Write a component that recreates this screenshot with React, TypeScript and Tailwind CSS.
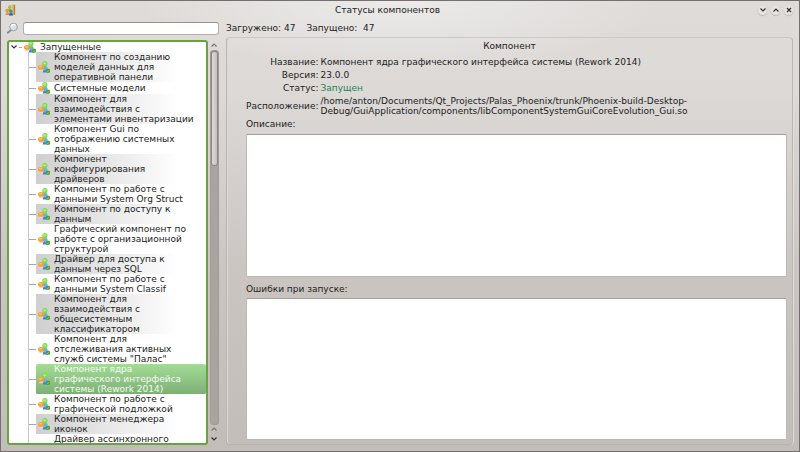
import { ReactNode } from "react";

type Row = { text: string; partial?: boolean };

const rows: Row[] = [
  { text: "Компонент по созданию\nмоделей данных для\nоперативной панели" },
  { text: "Системные модели" },
  { text: "Компонент для\nвзаимодействия с\nэлементами инвентаризации" },
  { text: "Компонент Gui по\nотображению системных\nданных" },
  { text: "Компонент\nконфигурирования\nдрайверов" },
  { text: "Компонент по работе с\nданными System Org Struct" },
  { text: "Компонент по доступу к\nданным" },
  { text: "Графический компонент по\nработе с организационной\nструктурой" },
  { text: "Драйвер для доступа к\nданным через SQL" },
  { text: "Компонент по работе с\nданными System Classif" },
  { text: "Компонент для\nвзаимодействия с\nобщесистемным\nклассификатором" },
  { text: "Компонент для\nотслеживания активных\nслужб системы \"Палас\"" },
  { text: "Компонент ядра\nграфического интерфейса\nсистемы (Rework 2014)" },
  { text: "Компонент по работе с\nграфической подложкой" },
  { text: "Компонент менеджера\nиконок" },
  { text: "Драйвер ассинхронного", partial: true },
];

const SELECTED = 12;

function PeopleIcon() {
  return (
    <svg viewBox="0 0 12 12" className="size-3 shrink-0" aria-hidden="true">
      <path d="M4.500 7.500C4.500 5.400 5.400 4.500 7 4.500s2.700 0.900 2.700 3z" fill="#8fd463" />
      <circle cx="6.900" cy="2.700" r="2.600" fill="#7ddc48" />
      <circle cx="6.700" cy="2.300" r="1.400" fill="#a9ee78" />
      <path d="M1.200 10.200C1.200 8.400 2 7.600 3.400 7.600s2.400 0.800 2.400 2.600z" fill="#e6d8c2" />
      <ellipse cx="3" cy="6.400" rx="3" ry="2.300" fill="#f7a02c" />
      <ellipse cx="2.600" cy="5.800" rx="1.600" ry="1" fill="#ffc566" />
      <path d="M4.800 11.500c0-2.300 1-3.500 2.900-3.500s2.700 1.200 2.700 3.500z" fill="#3f83d6" />
      <circle cx="7.400" cy="7.400" r="2.100" fill="#6fabf0" />
      <rect x="8" y="7.800" width="4" height="4" rx="1.200" fill="#4fa02a" />
      <path d="M8.900 9.800l0.900 0.900 1.300-1.600" fill="none" stroke="#a9e285" strokeWidth="0.600" />
    </svg>
  );
}

function AppIcon() {
  return (
    <svg viewBox="0 0 12 12" className="size-3" aria-hidden="true">
      <path d="M4 1.2L9.6 0.6v10.2L4 11.4z" fill="#e9bd68" />
      <path d="M8.6 0.6l1.6 0.6v9.4l-1.6 0.7z" fill="#b88637" />
      <path d="M5 2.2l1.2-0.2v5L5 7.2z" fill="#fff1c4" />
      <circle cx="4.6" cy="3.2" r="1.6" fill="#7fcf46" />
      <path d="M3 7c0-1.6 0.7-2.2 1.8-2.2S6.500 5.400 6.500 7z" fill="#64b62f" />
      <circle cx="2.300" cy="6.600" r="1.900" fill="#f2952a" />
      <path d="M0.500 11c0-2 0.700-2.700 2-2.700s2 0.700 2 2.700z" fill="#c69a66" />
      <circle cx="6" cy="7.400" r="1.700" fill="#4d86cf" />
      <path d="M4 11.600c0-2 0.700-2.700 2-2.700s2 0.700 2 2.700z" fill="#2c62ab" />
    </svg>
  );
}

function SearchIcon() {
  return (
    <svg viewBox="0 0 13 13" className="size-[13px] shrink-0" aria-hidden="true">
      <path d="M5 8L1.800 10.800" stroke="#8b8d91" strokeWidth="1.800" strokeLinecap="round" />
      <circle cx="7.500" cy="5" r="3.800" fill="#d5e2ef" stroke="#9aa0a8" strokeWidth="1" />
      <path d="M5 5a2.500 2.500 0 0 1 4.500-1.500" fill="none" stroke="#fff" strokeWidth="1.200" />
    </svg>
  );
}

function Chevron({ up = false, color = "#333" }: { up?: boolean; color?: string }) {
  return (
    <svg viewBox="0 0 8 6" className="h-[6px] w-2" aria-hidden="true">
      <path d={up ? "M1.500 4.500L4 2l2.500 2.500" : "M1.500 1.500L4 4l2.500-2.500"} fill="none" stroke={color} strokeWidth="1.200" />
    </svg>
  );
}

function WindowButton({ label, children }: { label: string; children: ReactNode }) {
  return (
    <button
      type="button"
      aria-label={label}
      className="flex size-[9px] items-center justify-center rounded-full bg-[#e6e3e1] shadow-[0_1px_1px_#bcb8b6]"
    >
      {children}
    </button>
  );
}

function ComponentTree() {
  return (
    <div className="flex w-[212px] shrink-0 gap-[1px]">
      <div className="min-h-0 w-[201px] overflow-hidden rounded-[3px] border-2 border-[#68a342] bg-white">
        <button type="button" aria-expanded="true" className="flex h-[10px] w-full items-center text-left">
          <span className="flex w-[10px] justify-center">
            <Chevron />
          </span>
          <span className="mr-[2px] h-px w-[3px] bg-[#a8a8a8]" />
          <PeopleIcon />
          <span className="ml-1">Запущенные</span>
        </button>
        <ul className="ml-[19px] border-l border-[#c9c9c9]">
          {rows.map((row, i) => {
            const selected = i === SELECTED;
            const tone = selected
              ? "rounded-[2px] bg-linear-to-b from-[#a3dc95] to-[#7fb077] text-[#f4faf2] shadow-[inset_0_-1px_0_#7cae70]"
              : i % 2 === 0
                ? "bg-linear-to-r from-[#cfcfcf] to-white to-[142px]"
                : "";
            return (
              <li key={row.text} className="flex items-center">
                {!row.partial && <span className="h-px w-[7px] shrink-0 bg-[#a8a8a8]" />}
                <button
                  type="button"
                  aria-pressed={selected}
                  className={`flex flex-1 items-center gap-1 text-left whitespace-pre ${row.partial ? "pl-[25px]" : "min-h-3 pl-[2px]"} ${tone}`}
                >
                  {!row.partial && <PeopleIcon />}
                  <span>{row.text}</span>
                </button>
              </li>
            );
          })}
        </ul>
      </div>
      <div className="flex w-[10px] flex-col items-center">
        <button type="button" aria-label="Вверх" className="flex h-[10px] items-center">
          <Chevron up color="#777" />
        </button>
        <div className="w-[9px] flex-1 rounded-[3px] border border-[#a19b98] bg-[#aaa4a1]">
          <div className="h-[115px] rounded-[3px] border border-[#8b8683] bg-linear-to-r from-[#dedbd9] to-[#c4bfbc]" />
        </div>
        <button type="button" aria-label="Вверх на строку" className="flex h-2 items-center">
          <Chevron up color="#777" />
        </button>
        <button type="button" aria-label="Вниз" className="flex h-3 items-center">
          <Chevron />
        </button>
      </div>
    </div>
  );
}

function Field({ label, children }: { label: string; children: ReactNode }) {
  return (
    <>
      <dt className="self-center text-right">{label}</dt>
      <dd>{children}</dd>
    </>
  );
}

const areaClass =
  "block min-h-0 w-full flex-1 resize-none rounded-[2px] border border-[#bdb8b5] border-t-[#a39e9b] bg-white p-1 outline-none";

function Details() {
  return (
    <section className="flex min-w-0 flex-1 flex-col rounded-[4px] border border-[#b9b4b1] border-t-[#cbc8c6] px-[5px] pb-1 pl-[19px] shadow-[inset_1px_0_0_#dedad8,1px_0_0_#e2dfdd]">
      <h2 className="mt-[2px] pr-[14px] text-center leading-[12px]">Компонент</h2>
      <dl className="mt-[5px] grid grid-cols-[auto_1fr] gap-x-[2px] gap-y-[3px]">
        <Field label="Название:">Компонент ядра графического интерфейса системы (Rework 2014)</Field>
        <Field label="Версия:">23.0.0</Field>
        <Field label="Статус:">
          <span className="text-[#1c8351]">Запущен</span>
        </Field>
        <Field label="Расположение:">
          /home/anton/Documents/Qt_Projects/Palas_Phoenix/trunk/Phoenix-build-Desktop-
          <br />
          Debug/GuiApplication/components/libComponentSystemGuiCoreEvolution_Gui.so
        </Field>
      </dl>
      <label htmlFor="description" className="mt-[2px] mb-1 leading-[12px]">
        Описание:
      </label>
      <textarea id="description" readOnly className={areaClass} />
      <label htmlFor="errors" className="mt-[6px] mb-[3px] leading-[12px]">
        Ошибки при запуске:
      </label>
      <textarea id="errors" readOnly className={areaClass} />
    </section>
  );
}

export default function App() {
  return (
    <div className="flex h-screen flex-col border border-[#757070] bg-[radial-gradient(ellipse_260px_70px_at_50%_0,#ecebea,transparent),linear-gradient(#dfdbd9,#dcd9d7_20%,#cbc5c2_60%,#c3bdba)] font-['DejaVu_Sans',sans-serif] text-[9px] leading-[10px] text-[#222]">
      <header className="flex h-[18px] shrink-0 items-center pr-[6px] pl-1">
        <AppIcon />
        <h1 className="flex-1 text-center">Статусы компонентов</h1>
        <div className="flex justify-end gap-1">
          <WindowButton label="Свернуть">
            <Chevron />
          </WindowButton>
          <WindowButton label="Развернуть">
            <Chevron up />
          </WindowButton>
          <WindowButton label="Закрыть">
            <svg viewBox="0 0 6 6" className="size-[6px]" aria-hidden="true">
              <path d="M1 1l4 4M5 1L1 5" stroke="#333" strokeWidth="1.200" />
            </svg>
          </WindowButton>
        </div>
      </header>
      <div className="flex h-[18px] shrink-0 items-center pl-[5px]">
        <SearchIcon />
        <input
          type="search"
          aria-label="Поиск"
          className="ml-1 h-[13px] w-[196px] rounded-[3px] border border-[#b5afac] border-t-[#98928f] bg-white px-1 outline-none"
        />
        <span className="ml-[7px]">Загружено: 47</span>
        <span className="ml-[11px] whitespace-pre">Запущено:  47</span>
      </div>
      <main className="flex min-h-0 flex-1 gap-[7px] pr-[6px] pb-[6px] pl-[6px]">
        <div className="flex pt-[3px]">
          <ComponentTree />
        </div>
        <Details />
      </main>
    </div>
  );
}
